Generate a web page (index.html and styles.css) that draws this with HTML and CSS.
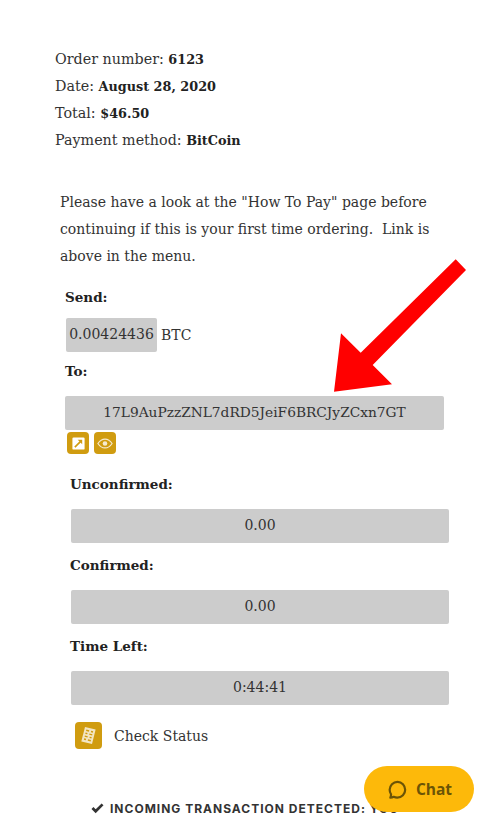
FILE: index.html
```html
<!DOCTYPE html>
<html lang="en">
<head>
<meta charset="utf-8">
<title>Order payment</title>
<link rel="stylesheet" href="styles.css">
</head>
<body>
<main class="page">
  <ul class="order">
    <li>Order number: <b>6123</b></li>
    <li>Date: <b>August 28, 2020</b></li>
    <li>Total: <b>$46.50</b></li>
    <li>Payment method: <b>BitCoin</b></li>
  </ul>
  <p class="intro">Please have a look at the "How To Pay" page before continuing if this is your first time ordering.&nbsp; Link is above in the menu.</p>
  <section class="pay">
    <h4 class="label">Send:</h4>
    <div class="amount"><span class="field field-inline">0.00424436</span> <span>BTC</span></div>
    <h4 class="label label-to">To:</h4>
    <div class="field field-wide">17L9AuPzzZNL7dRD5JeiF6BRCJyZCxn7GT</div>
    <div class="tools">
      <span class="tool"><svg viewBox="0 0 16 16" width="13" height="13"><rect x="0.500" y="0.500" width="15" height="15" rx="1.500" fill="#fff"/><path d="M3.500 12.500 11 5" fill="none" stroke="#d09c10" stroke-width="2"/><path d="M7 3.500h5.500V9z" fill="#d09c10"/></svg></span>
      <span class="tool"><svg viewBox="0 0 18 12" width="16" height="11"><path d="M1 6c2-3 5-5 8-5s6 2 8 5c-2 3-5 5-8 5S3 9 1 6z" fill="none" stroke="#f6ead0" stroke-width="1.300"/><circle cx="9" cy="6" r="2.600" fill="#f6ead0"/></svg></span>
    </div>
    <div class="status">
      <h4 class="label">Unconfirmed:</h4>
      <div class="field">0.00</div>
      <h4 class="label">Confirmed:</h4>
      <div class="field">0.00</div>
      <h4 class="label">Time Left:</h4>
      <div class="field">0:44:41</div>
    </div>
    <div class="check">
      <span class="check-icon"><svg viewBox="0 0 27 27" width="27" height="27"><g transform="rotate(14 13.500 13.500)"><rect x="8" y="6" width="11" height="15" fill="#f3e6c4"/><path d="M10 9h3M15 9h2M10 12h2M14 12h3M10 15h3M15 15h2M10 18h2M14 18h3" stroke="#d09c10" stroke-width="1.400"/></g></svg></span>
      <span>Check Status</span>
    </div>
    <div class="incoming"><svg class="tick" viewBox="0 0 14 12" width="13" height="11"><path d="M1.500 5.500 5 9l7.500-7.500" fill="none" stroke="#333" stroke-width="3"/></svg><span>INCOMING TRANSACTION DETECTED: YOU</span></div>
  </section>
</main>
<svg class="arrow" viewBox="0 0 140 150" width="140" height="150"><path d="M127.700 1.300 138 12 44.700 107 64 126.300 6 133.700 13 75.300 32.700 94.700z" fill="#ff0000"/></svg>
<button class="chat" type="button"><svg viewBox="0 0 24 24" width="23" height="23"><path d="M4.500 20.500c1.500 0 2.500-.3 3.500-.9 1.200.6 2.500.9 3.800.9 4.700 0 8.200-3.700 8.200-8.200S16.500 4 12 4 3.800 7.700 3.800 12.300c0 1.800.6 3.400 1.500 4.700 0 1.400-.3 2.500-.8 3.500z" fill="none" stroke="#6b5406" stroke-width="2.300" stroke-linejoin="round"/></svg><span>Chat</span></button>
</body>
</html>
```
FILE: styles.css
```css
* { box-sizing: border-box; }
html, body { margin: 0; padding: 0; }
body {
  position: relative;
  width: 489px;
  height: 826px;
  overflow: hidden;
  background: #fff;
  color: #333;
  font-family: "DejaVu Serif", "Liberation Serif", serif;
  font-size: 14px;
}
.page { padding: 46px 40px 0 55px; }
.order { list-style: none; margin: 0; padding: 0; line-height: 27px; font-size: 14.3px; }
.order b { color: #222; font-size: 12.8px; }
.intro { margin: 35px 0 0 5px; line-height: 27px; width: 385px; }
.pay { margin: 17px 0 0 10px; }
.label { margin: 0; font-size: 13.5px; line-height: 20px; font-weight: 700; color: #222; }
.amount { display: flex; align-items: center; gap: 4px; margin-top: 11px; line-height: 34px; }
.field { background: #ccc; border-radius: 2px; height: 34px; line-height: 33px; text-align: center; }
.field-inline { display: block; width: 91px; margin-left: 1px; white-space: nowrap; }
.label-to { margin-top: 9px; }
.field-wide { margin-top: 15px; width: 379px; font-size: 13.75px; }
.tools { display: flex; gap: 5px; margin: 2px 0 0 2px; }
.tool { display: flex; align-items: center; justify-content: center; width: 22px; height: 22px; background: #d09c10; border-radius: 4px; }
.status { margin: 20px 0 0 5px; width: 379px; }
.status .label { margin-top: 12px; }
.status .label:first-child { margin-top: 0; }
.status .field { margin: 15px 0 0 1px; }
.check { display: flex; align-items: center; gap: 12px; margin: 17px 0 0 10px; }
.check-icon { display: block; width: 27px; height: 27px; background: #d09c10; border-radius: 4px; }
.check-icon svg { display: block; }
.incoming { display: flex; align-items: center; gap: 6px; margin: 52px 0 0 26px; white-space: nowrap; font-family: "Inter", "Open Sans", sans-serif; font-size: 12px; font-weight: 700; letter-spacing: 1px; color: #333; }
.arrow { position: absolute; left: 328px; top: 258px; }
.chat {
  position: absolute; left: 364px; top: 766px; width: 110px; height: 46px;
  display: flex; align-items: center; justify-content: center; gap: 7px;
  border: 0; border-radius: 23px; background: #fdb90a; color: #6b5406;
  font-family: "Open Sans", sans-serif; font-size: 15.5px; font-weight: 700;
}
```
